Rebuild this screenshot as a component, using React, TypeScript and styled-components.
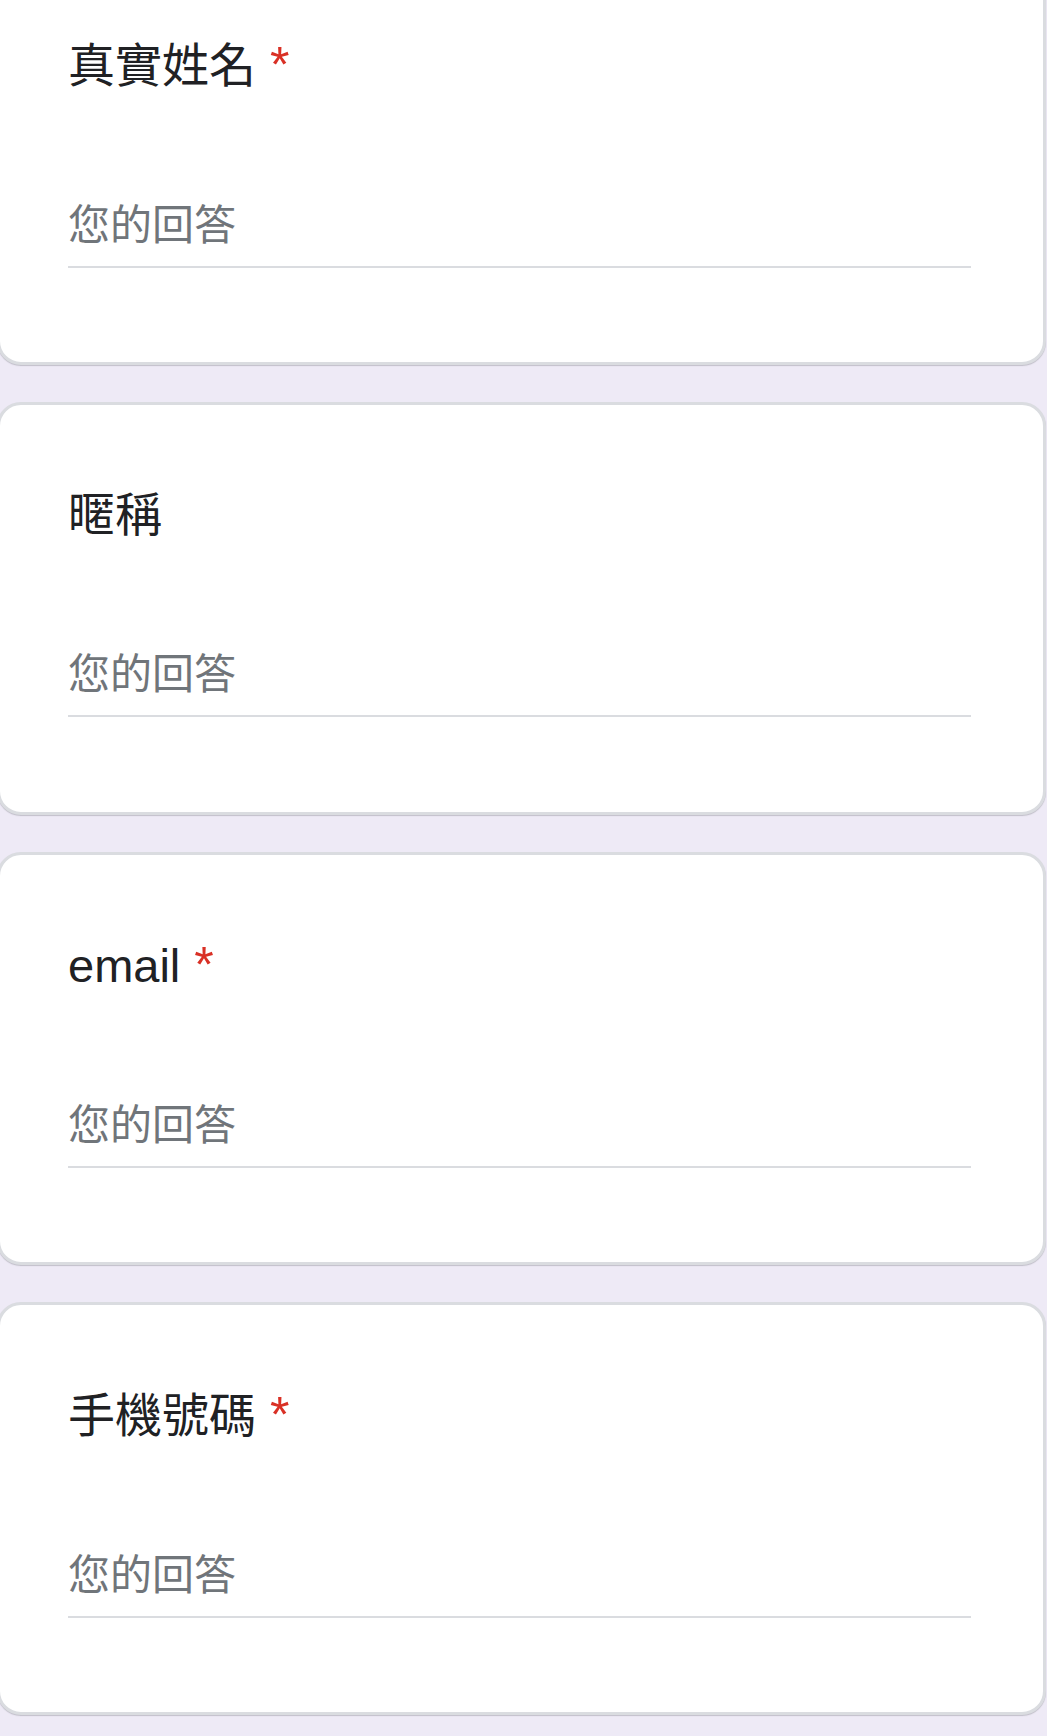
import React from 'react';
import styled, {createGlobalStyle} from 'styled-components';

const GlobalStyle = createGlobalStyle`
  html, body {
    margin: 0;
    padding: 0;
    background: #eeeaf6;
  }
  body {
    font-family: "Liberation Sans", "Noto Sans CJK TC", sans-serif;
    overflow: hidden;
  }
`;

interface IQuestion {
  title: string;
  required: boolean;
}

const questions: IQuestion[] = [
  {title: '真實姓名', required: true},
  {title: '暱稱', required: false},
  {title: 'email', required: true},
  {title: '手機號碼', required: true},
];

const App = () => {
  return (
    <>
      <GlobalStyle/>
      <Page>
        {questions.map(q => (
          <Card key={q.title}>
            <Title>
              {q.title}
              {q.required && <Required> *</Required>}
            </Title>
            <Answer>您的回答</Answer>
          </Card>
        ))}
      </Page>
    </>
  );
};

export default App;

// ページはスクロール途中の状態なので、最初のカードは上が切れている
const Page = styled.div`
  display: flex;
  flex-direction: column;
  gap: 37px;
  margin-top: -48px;
  margin-left: -3px;
  width: 1049px;
  padding-bottom: 23px;
`;

const Card = styled.div`
  box-sizing: border-box;
  height: 413px;
  background: #fff;
  border: 3px solid #dadce0;
  border-radius: 24px;
  box-shadow: 0 1px 1px rgba(60, 64, 67, 0.25);
  padding: 78px 72px 0 68px;
  display: flex;
  flex-direction: column;
`;

const Title = styled.div`
  font-size: 47px;
  line-height: 64px;
  color: #202124;
  white-space: nowrap;
`;

const Required = styled.span`
  color: #d93025;
  font-size: 50px;
`;

const Answer = styled.div`
  margin-top: 100px;
  font-size: 42px;
  line-height: 56px;
  color: #70757a;
  padding-bottom: 12px;
  border-bottom: 2px solid #dadce0;
`;
